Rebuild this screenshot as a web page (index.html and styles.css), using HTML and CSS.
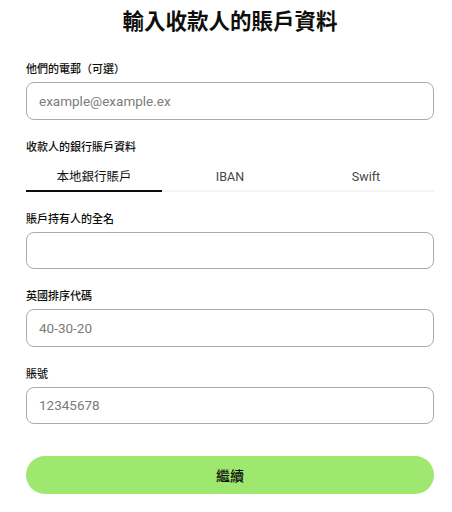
FILE: index.html
```html
<!DOCTYPE html>
<html lang="zh-Hant">
<head>
<meta charset="utf-8">
<title>輸入收款人的賬戶資料</title>
<link rel="stylesheet" href="styles.css">
</head>
<body>
<main class="page">
  <h1 class="title">輸入收款人的賬戶資料</h1>
  <div class="field first">
    <label class="label">他們的電郵（可選）</label>
    <input class="input" type="text" placeholder="example@example.ex">
  </div>
  <div class="field">
    <div class="label">收款人的銀行賬戶資料</div>
    <div class="tabs">
      <div class="tab active">本地銀行賬戶</div>
      <div class="tab">IBAN</div>
      <div class="tab">Swift</div>
    </div>
  </div>
  <div class="field">
    <label class="label">賬戶持有人的全名</label>
    <input class="input" type="text">
  </div>
  <div class="field">
    <label class="label">英國排序代碼</label>
    <input class="input" type="text" placeholder="40-30-20">
  </div>
  <div class="field">
    <label class="label">賬號</label>
    <input class="input" type="text" placeholder="12345678">
  </div>
  <button class="button" type="button">繼續</button>
</main>
</body>
</html>
```
FILE: styles.css
```css
* { box-sizing: border-box; }
html, body { margin: 0; padding: 0; background: #fff; }
body {
  font-family: Roboto, "Noto Sans CJK TC", "Noto Sans", sans-serif;
  color: #0e0f0c;
}
.page {
  display: flex;
  flex-direction: column;
  padding: 8px 18px 0 26px;
}
.title {
  margin: 0;
  font-size: 21.5px;
  line-height: 28px;
  font-weight: 700;
  text-align: center;
}
.field {
  display: flex;
  flex-direction: column;
  gap: 4px;
  margin-top: 20px;
}
.field.first { margin-top: 26px; }
.label {
  font-size: 11px;
  line-height: 16px;
  font-weight: 500;
}
.input {
  height: 37.5px;
  border: 1px solid #a9abaa;
  border-radius: 8px;
  padding: 0 12px;
  font: inherit;
  font-size: 13.5px;
  color: #0e0f0c;
  background: #fff;
  outline: none;
}
.input::placeholder { color: #7a7c7a; }
.tabs {
  display: grid;
  grid-template-columns: repeat(3, 1fr);
  border-bottom: 2px solid #f3f3f3;
}
.tab {
  text-align: center;
  font-size: 12.5px;
  line-height: 17px;
  padding: 8px 0 5px;
  margin-bottom: -2px;
  border-bottom: 2px solid transparent;
  color: #454745;
}
.tab.active {
  color: #0e0f0c;
  border-bottom-color: #0e0f0c;
}
.button {
  margin-top: 32px;
  height: 38px;
  border: none;
  border-radius: 19px;
  background: #9fe870;
  color: #0e0f0c;
  font: inherit;
  font-size: 14px;
  font-weight: 500;
}
```
